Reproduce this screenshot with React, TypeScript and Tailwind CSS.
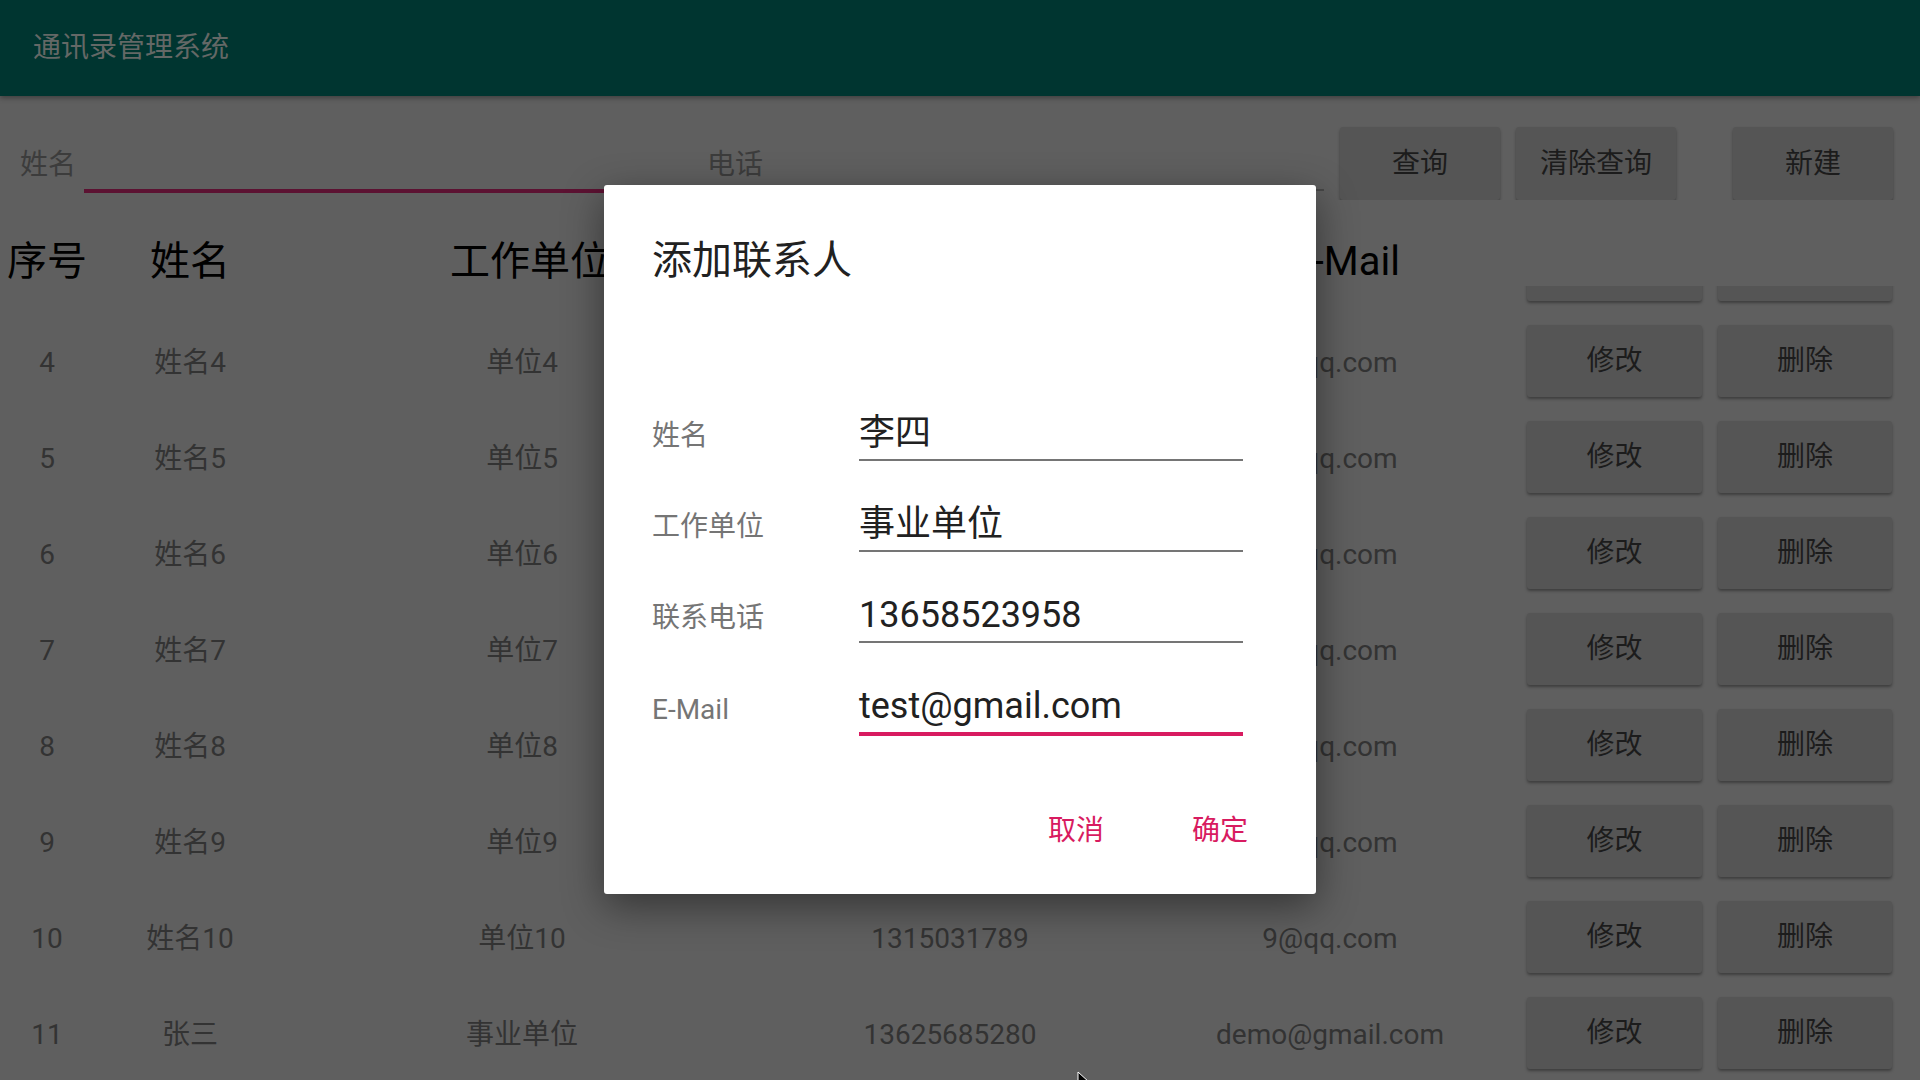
import React from "react";

type Row = { id: number; name: string; unit: string; phone: string; email: string };

const rows: Row[] = [
  { id: 4, name: "姓名4", unit: "单位4", phone: "1315031783", email: "3@qq.com" },
  { id: 5, name: "姓名5", unit: "单位5", phone: "1315031784", email: "4@qq.com" },
  { id: 6, name: "姓名6", unit: "单位6", phone: "1315031785", email: "5@qq.com" },
  { id: 7, name: "姓名7", unit: "单位7", phone: "1315031786", email: "6@qq.com" },
  { id: 8, name: "姓名8", unit: "单位8", phone: "1315031787", email: "7@qq.com" },
  { id: 9, name: "姓名9", unit: "单位9", phone: "1315031788", email: "8@qq.com" },
  { id: 10, name: "姓名10", unit: "单位10", phone: "1315031789", email: "9@qq.com" },
  { id: 11, name: "张三", unit: "事业单位", phone: "13625685280", email: "demo@gmail.com" },
];

function GrayButton({ label, className }: { label: string; className: string }) {
  return (
    <div
      className={
        "flex items-center justify-center rounded-[3px] bg-[#555555] text-[28px] text-[#1c1c1c] shadow-[0_2px_3px_rgba(0,0,0,0.35)] " +
        className
      }
    >
      {label}
    </div>
  );
}

function FormRow({ label, value, focused }: { label: string; value: string; focused?: boolean }) {
  return (
    <div className="flex items-center">
      <div className="w-[207px] pt-[4px] text-[28px] leading-[40px] text-[#757575]">{label}</div>
      <div
        className={
          focused
            ? "flex h-[56px] w-[384px] items-center border-b-[4px] border-[#D81B60] text-[36px] text-[#212121]"
            : "flex h-[54px] w-[384px] items-center border-b-[2px] border-[#757575] text-[36px] text-[#212121]"
        }
      >
        {value}
      </div>
    </div>
  );
}

export default function App() {
  return (
    <div className="relative h-[1080px] w-[1920px] overflow-hidden bg-[#5f5f5f] font-[Roboto,'Noto_Sans_CJK_SC',sans-serif]">
      {/* App bar */}
      <div className="relative z-10 flex h-[96px] items-center bg-[#003530] pl-[33px] text-[28px] text-[#646866] shadow-[0_2px_5px_rgba(0,0,0,0.35)]">
        通讯录管理系统
      </div>

      {/* Search row */}
      <div className="flex h-[104px] items-start pt-[31px]">
        <div className="flex h-[73px] w-[84px] shrink-0 items-center pl-[20px] pt-[2px] text-[28px] whitespace-nowrap text-[#3c3c3c]">
          姓名
        </div>
        <div className="relative h-[73px] w-[611px] shrink-0">
          <div className="absolute left-0 right-0 top-[62px] h-[4px] bg-[#5c1232]" />
        </div>
        <div className="relative ml-[5px] flex h-[73px] w-[624px] shrink-0 items-center pl-[7px] pt-[2px] text-[28px] text-[#3c3c3c]">
          电话
          <div className="absolute left-0 right-0 top-[62px] h-[2px] bg-[#474747]" />
        </div>
        <GrayButton label="查询" className="ml-[16px] h-[73px] w-[160px] shrink-0" />
        <GrayButton label="清除查询" className="ml-[16px] h-[73px] w-[160px] shrink-0" />
        <GrayButton label="新建" className="ml-[57px] h-[73px] w-[160px] shrink-0" />
      </div>

      {/* Table header */}
      <div className="relative z-10 flex h-[86px] items-start bg-[#5f5f5f] pt-[40px] text-[40px] leading-[44px] text-black">
        <div className="w-[94px] text-center">序号</div>
        <div className="w-[192px] text-center">姓名</div>
        <div className="w-[488px] text-center">工作单位</div>
        <div className="w-[384px] text-center">电话</div>
        <div className="w-[374px] text-center">E-Mail</div>
      </div>

      {/* List (scrolled: row 3 mostly hidden under the header) */}
      <div className="h-[794px] overflow-hidden">
        <div className="-mt-[69px]">
          <div className="flex h-[96px] items-center">
            <div className="w-[1518px]" />
            <GrayButton label="" className="ml-[9px] h-[72px] w-[175px]" />
            <GrayButton label="" className="ml-[16px] h-[72px] w-[174px]" />
          </div>
          {rows.map((r) => (
            <div key={r.id} className="flex h-[96px] items-center text-[28px] text-[#333333]">
              <div className="w-[94px] pt-[3px] text-center">{r.id}</div>
              <div className="w-[192px] pt-[3px] text-center">{r.name}</div>
              <div className="w-[472px] pt-[3px] text-center">{r.unit}</div>
              <div className="w-[384px] pt-[3px] text-center">{r.phone}</div>
              <div className="w-[376px] pt-[3px] text-center">{r.email}</div>
              <GrayButton label="修改" className="ml-[9px] h-[72px] w-[175px]" />
              <GrayButton label="删除" className="ml-[16px] h-[72px] w-[174px]" />
            </div>
          ))}
        </div>
      </div>

      {/* Dialog */}
      <div className="absolute left-[604px] top-[185px] z-20 h-[709px] w-[712px] rounded-[3px] bg-white pl-[48px] pt-[52px] shadow-[0_12px_40px_rgba(0,0,0,0.45)]">
        <div className="text-[40px] leading-[48px] text-[#212121]">添加联系人</div>
        <div className="mt-[122px] flex flex-col gap-[37px]">
          <FormRow label="姓名" value="李四" />
          <FormRow label="工作单位" value="事业单位" />
          <FormRow label="联系电话" value="13658523958" />
          <FormRow label="E-Mail" value="test@gmail.com" focused />
        </div>
        <div className="mt-[75px] flex justify-end gap-[88px] pr-[68px] text-[28px] leading-[40px] text-[#D81B60]">
          <span>取消</span>
          <span>确定</span>
        </div>
      </div>

      {/* Mouse cursor */}
      <svg className="absolute left-[1077px] top-[1071px] z-30" width="14" height="20" viewBox="0 0 14 20">
        <path d="M1 1 L1 16 L5 12 L8 19 L10 18 L7 11 L12 11 Z" fill="#000" stroke="#fff" strokeWidth="1" />
      </svg>
    </div>
  );
}
